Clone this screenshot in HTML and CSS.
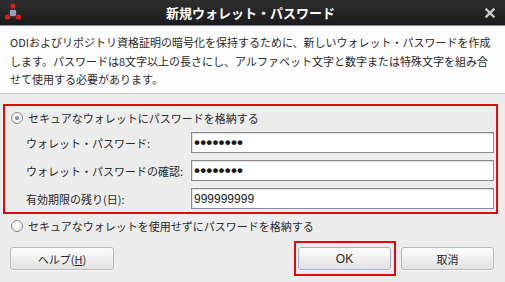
FILE: index.html
```html
<!DOCTYPE html>
<html lang="ja">
<head>
<meta charset="utf-8">
<title>新規ウォレット・パスワード</title>
<link rel="stylesheet" href="styles.css">
</head>
<body>
<div class="dialog">
  <div class="titlebar">
    <svg class="app-icon" width="20" height="20" viewBox="0 0 20 20">
      <line x1="9" y1="3" x2="3.5" y2="14" stroke="#444" stroke-width="1"/>
      <line x1="9" y1="3" x2="14.5" y2="14" stroke="#444" stroke-width="1"/>
      <line x1="3.5" y1="14" x2="14.5" y2="14" stroke="#444" stroke-width="1"/>
      <rect x="6.5" y="7.5" width="5" height="5" fill="#9a9ac8" stroke="#c8c8e8" stroke-width="0.6"/>
      <circle cx="9" cy="3" r="2.6" fill="#e01818"/>
      <circle cx="3.5" cy="14" r="2.6" fill="#e01818"/>
      <circle cx="14.5" cy="14" r="2.6" fill="#e01818"/>
    </svg>
    <div class="title">新規ウォレット・パスワード</div>
    <svg class="close" width="10" height="10" viewBox="0 0 10 10">
      <path d="M1.5 1.5 L8.5 8.5 M8.5 1.5 L1.5 8.5" stroke="#c9c9c9" stroke-width="2.4" stroke-linecap="square"/>
    </svg>
  </div>
  <div class="desc">
    <div class="line">ODIおよびリポジトリ資格証明の暗号化を保持するために、新しいウォレット・パスワードを作成</div>
    <div class="line">します。パスワードは8文字以上の長さにし、アルファベット文字と数字または特殊文字を組み合</div>
    <div class="line">せて使用する必要があります。</div>
  </div>
  <div class="main">
    <div class="highlight-box">
      <div class="radio-row">
        <span class="radio checked"></span>
        <span class="radio-label">セキュアなウォレットにパスワードを格納する</span>
      </div>
      <div class="fields">
        <label class="field-label">ウォレット・パスワード:</label>
        <div class="input pw">••••••••</div>
        <label class="field-label">ウォレット・パスワードの確認:</label>
        <div class="input pw">••••••••</div>
        <label class="field-label">有効期限の残り(日):</label>
        <div class="input num">999999999</div>
      </div>
    </div>
    <div class="radio-row second">
      <span class="radio"></span>
      <span class="radio-label">セキュアなウォレットを使用せずにパスワードを格納する</span>
    </div>
    <div class="buttons">
      <button class="btn help">ヘルプ(<u>H</u>)</button>
      <div class="spacer"></div>
      <div class="ok-wrap"><button class="btn ok">OK</button></div>
      <button class="btn cancel">取消</button>
    </div>
  </div>
</div>
</body>
</html>
```

FILE: styles.css
```css
* { box-sizing: border-box; }
html, body { margin: 0; padding: 0; }
body {
  width: 505px;
  height: 282px;
  overflow: hidden;
  font-family: "Noto Sans CJK JP", "Noto Sans", sans-serif;
  font-size: 11px;
  color: #2a2a2a;
  background: #ececec;
}
.dialog {
  width: 505px;
  height: 282px;
  display: flex;
  flex-direction: column;
}
.titlebar {
  height: 26px;
  flex: none;
  display: flex;
  align-items: center;
  background: linear-gradient(#2e2e2e, #1c1c1c);
  border-bottom: 1px solid #8a93a6;
  padding-left: 4px;
  padding-right: 10px;
}
.app-icon { flex: none; margin-top: 1px; }
.title {
  flex: 1;
  text-align: center;
  color: #ffffff;
  font-weight: bold;
  font-size: 13px;
  margin-left: -8px;
}
.close { flex: none; margin-top: 1px; }
.desc {
  height: 68px;
  flex: none;
  background: #fdfdfd;
  border-bottom: 1px solid #c9c9c9;
  padding: 7px 10px 0 10px;
  line-height: 18.5px;
  color: #2a2a2a;
}
.desc .line { white-space: nowrap; }
.main {
  flex: 1;
  display: flex;
  flex-direction: column;
  background: #ececec;
  padding-top: 10px;
}
.highlight-box {
  margin-left: 3px;
  width: 495px;
  height: 110px;
  border: 2px solid #e00a0a;
  padding: 2px 2px 0 0;
}
.radio-row {
  height: 20px;
  display: flex;
  align-items: center;
  padding-left: 6px;
  gap: 5px;
}
.radio-row.second {
  margin-top: 2px;
  padding-left: 11px;
}
.radio {
  width: 12px;
  height: 12px;
  border-radius: 50%;
  border: 1px solid #8d8d8d;
  background: radial-gradient(circle at 50% 35%, #ffffff, #e6e6e6);
  position: relative;
  flex: none;
}
.radio.checked::after {
  content: "";
  position: absolute;
  left: 3px;
  top: 3px;
  width: 4px;
  height: 4px;
  border-radius: 50%;
  background: radial-gradient(circle at 40% 35%, #8fb0f0, #2d5fc8);
}
.fields {
  display: grid;
  grid-template-columns: 165px 1fr;
  row-gap: 7px;
  margin-top: 4px;
  padding-left: 21px;
  align-items: center;
}
.field-label { white-space: nowrap; color: #2a2a2a; }
.input {
  height: 21px;
  border: 1px solid #8a8a8a;
  background: #ffffff;
  box-shadow: inset 1px 1px 0 #e2e2e2;
  padding-left: 2px;
  display: flex;
  align-items: center;
  overflow: hidden;
  color: #1a1a1a;
}
.input.pw {
  font-family: "Liberation Sans", sans-serif;
  font-weight: bold;
  font-size: 17px;
  letter-spacing: 0.2px;
  line-height: 19px;
}
.input.num {
  font-family: "Liberation Sans", sans-serif;
  font-size: 12px;
}
.buttons {
  display: flex;
  align-items: center;
  margin-top: 5px;
  padding: 0 11px 0 10px;
  height: 35px;
}
.spacer { flex: 1; }
.btn {
  height: 23px;
  border: 1px solid #b9b9b9;
  border-radius: 3px;
  background: linear-gradient(#fdfdfd, #ececec 60%, #e2e2e2);
  font-family: "Noto Sans CJK JP", "Noto Sans", sans-serif;
  font-size: 11px;
  color: #2a2a2a;
  padding: 0;
  box-shadow: 0 1px 0 #f8f8f8;
}
.btn u { text-decoration: underline; text-underline-offset: 1px; }
.help { width: 104px; }
.ok-wrap {
  border: 2px solid #e00a0a;
  padding: 4px 3px 4px 2px;
  display: flex;
}
.ok {
  width: 93px;
  border-color: #9ab6d6;
  font-family: "Liberation Sans", sans-serif;
  font-size: 12px;
}
.cancel { width: 93px; margin-left: 5px; }
```
